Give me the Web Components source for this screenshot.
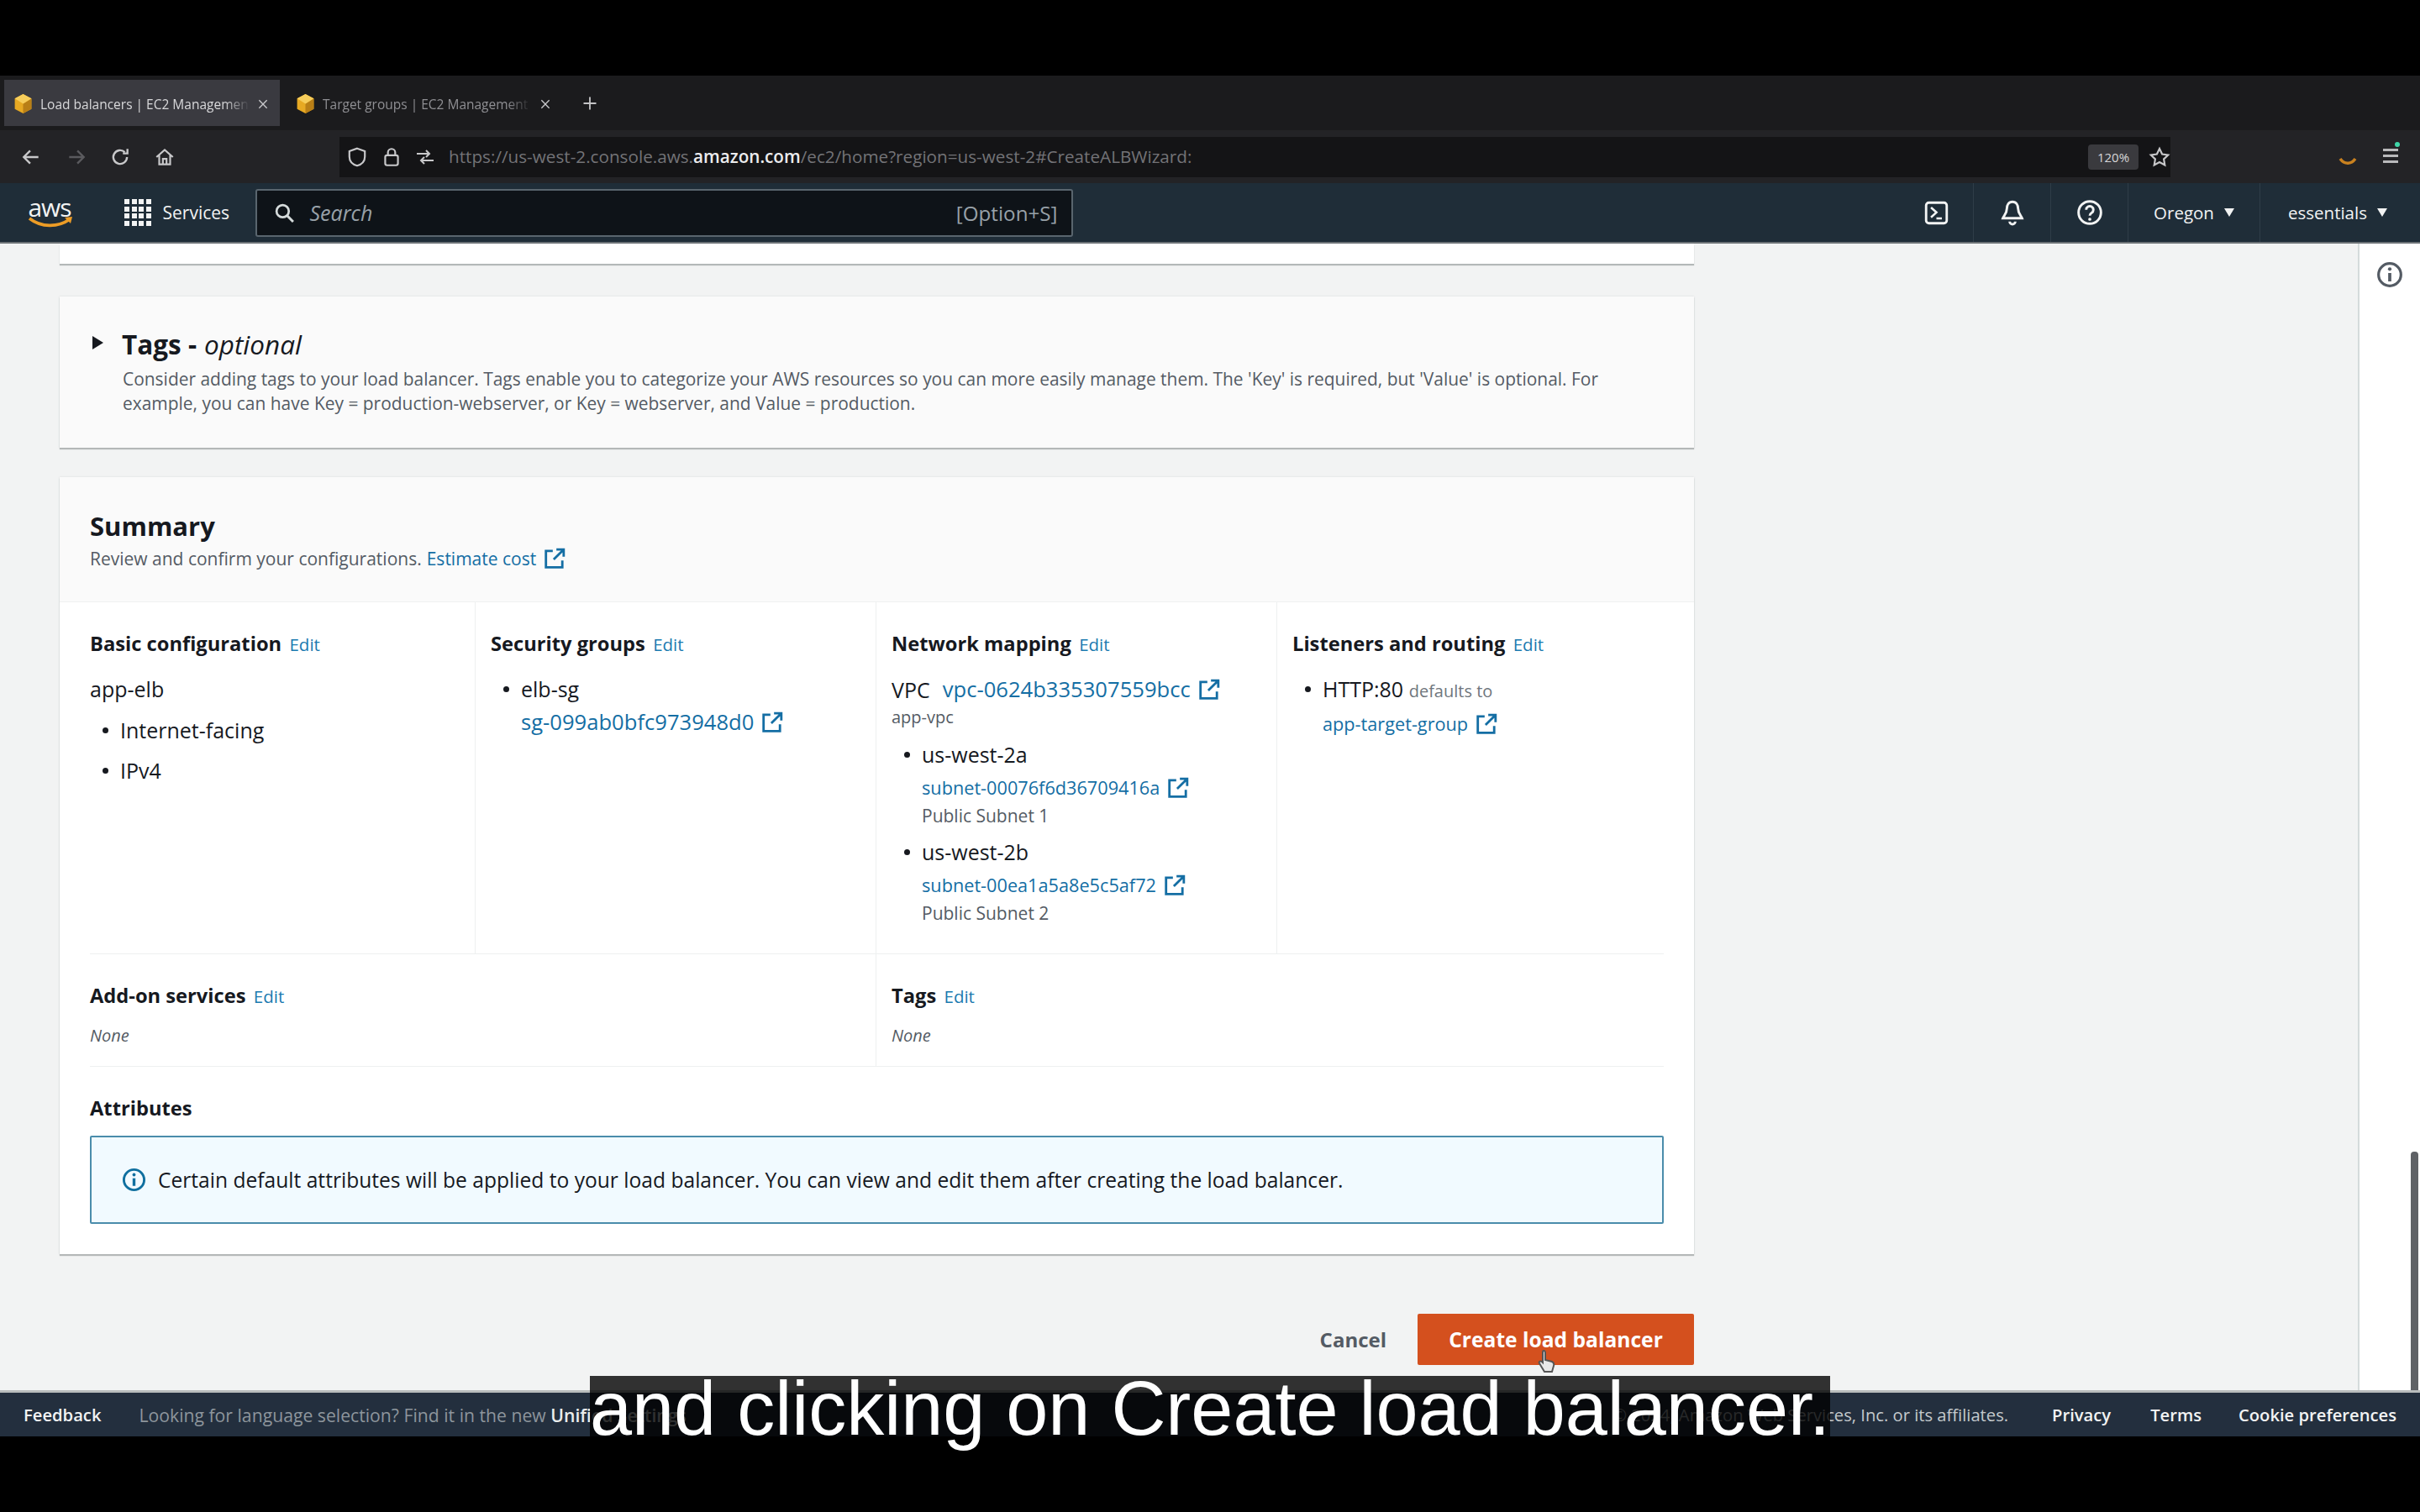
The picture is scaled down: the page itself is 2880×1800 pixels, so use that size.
<!DOCTYPE html>
<html lang="en">
<head>
<meta charset="utf-8">
<title>Load balancers | EC2 Management Console</title>
<style>
  html, body { margin: 0; background: #000; }
  body { width: 2880px; height: 1800px; overflow: hidden; position: relative; font-family: "Open Sans", "Noto Sans", sans-serif; }
</style>
</head>
<body>
<video-frame>
  <browser-tabs></browser-tabs>
  <browser-toolbar></browser-toolbar>
  <aws-nav></aws-nav>
  <console-main></console-main>
  <aws-footer></aws-footer>
</video-frame>
<video-caption>and clicking on Create load balancer.</video-caption>

<script>
const ICONS = {
  back: '<path d="M20 12H5M11 5l-7 7 7 7" fill="none" stroke="currentColor" stroke-width="2.2"/>',
  forward: '<path d="M4 12h15M13 5l7 7-7 7" fill="none" stroke="currentColor" stroke-width="2.2"/>',
  reload: '<path d="M19.5 12a7.5 7.5 0 1 1-2.4-5.5M20 3v5h-5" fill="none" stroke="currentColor" stroke-width="2.2"/>',
  home: '<path d="M3 12l9-8 9 8M6 10v10h12V10M10 20v-6h4v6" fill="none" stroke="currentColor" stroke-width="2"/>',
  shield: '<path d="M12 2.500l8.500 3v6c0 5-3.500 8.500-8.500 10-5-1.500-8.500-5-8.500-10v-6z" fill="none" stroke="currentColor" stroke-width="2"/>',
  lock: '<rect x="5" y="10" width="14" height="11" rx="2" fill="none" stroke="currentColor" stroke-width="2"/><path d="M8 10V7a4 4 0 0 1 8 0v3" fill="none" stroke="currentColor" stroke-width="2"/>',
  perms: '<path d="M2 8h15M13 4l4 4-4 4M22 16H7M11 12l-4 4 4 4" fill="none" stroke="currentColor" stroke-width="2"/>',
  star: '<path d="M12 2.800l2.900 6 6.500.9-4.700 4.500 1.100 6.500-5.800-3.100-5.800 3.100 1.100-6.500-4.700-4.500 6.500-.9z" fill="none" stroke="currentColor" stroke-width="2"/>',
  search: '<circle cx="10" cy="10" r="7" fill="none" stroke="currentColor" stroke-width="2.600"/><path d="M15 15l7 7" stroke="currentColor" stroke-width="2.800"/>',
  terminal: '<rect x="2.500" y="2.500" width="19" height="19" rx="2.500" fill="none" stroke="currentColor" stroke-width="2.200"/><path d="M7 7l5 4.500L7 16M12 17h5" fill="none" stroke="currentColor" stroke-width="2"/>',
  bell: '<path d="M12 2.500c-3.500 0-5 3-5 6 0 4-2.500 6-3.500 8.500h17c-1-2.500-3.500-4.500-3.500-8.500 0-3-1.500-6-5-6zM9.500 20a2.500 2.500 0 0 0 5 0" fill="none" stroke="currentColor" stroke-width="2.200"/>',
  help: '<circle cx="12" cy="12" r="10" fill="none" stroke="currentColor" stroke-width="2.200"/><path d="M8.800 9.500a3.200 3.200 0 1 1 4.800 2.800c-1 .6-1.600 1.200-1.600 2.500" fill="none" stroke="currentColor" stroke-width="2.200"/><circle cx="12" cy="18" r="1.400" fill="currentColor"/>',
  info: '<circle cx="12" cy="12" r="10" fill="none" stroke="currentColor" stroke-width="2.400"/><path d="M12 10.500V18" stroke="currentColor" stroke-width="2.800"/><circle cx="12" cy="7" r="1.600" fill="currentColor"/>',
  ext: '<path d="M10 3.500H2.500v18h18V14" fill="none" stroke="currentColor" stroke-width="2.600"/><path d="M14 2h8v8M21.500 2.500L11 13" fill="none" stroke="currentColor" stroke-width="2.600"/>',
  close: '<path d="M5 5l14 14M19 5L5 19" stroke="currentColor" stroke-width="2"/>',
  plus: '<path d="M12 3v18M3 12h18" stroke="currentColor" stroke-width="2.200"/>',
  cube: '<path d="M12 1l9.500 5v12L12 23l-9.500-5V6z" fill="#e7a923"/><path d="M12 12l9.500-6v12L12 23z" fill="#b97f16"/><path d="M12 12L2.500 6 12 1l9.500 5z" fill="#f6cd5b"/>'
};

class UiIcon extends HTMLElement {
  connectedCallback() {
    const size = this.getAttribute("size") || 24;
    this.attachShadow({ mode: "open" }).innerHTML = `
      <style>:host { display: inline-flex; flex: none; width: ${size}px; height: ${size}px; } svg { width: 100%; height: 100%; display: block; }</style>
      <svg viewBox="0 0 24 24">${ICONS[this.getAttribute("name")] || ""}</svg>`;
  }
}
customElements.define("ui-icon", UiIcon);

class VideoFrame extends HTMLElement {
  constructor() {
    super();
    this.attachShadow({ mode: "open" }).innerHTML = `
      <style>
        :host { display: flex; flex-direction: column; width: 2880px; height: 1620px; margin-top: 90px; filter: blur(.7px); }
        ::slotted(console-main) { flex: 1; min-height: 0; }
      </style>
      <slot></slot>`;
  }
}
customElements.define("video-frame", VideoFrame);

class BrowserTab extends HTMLElement {
  constructor() {
    super();
    this.attachShadow({ mode: "open" }).innerHTML = `
      <style>
        :host { display: flex; align-items: center; gap: 8px; width: 328px; height: 55px; padding: 2px 12px 0 10px; box-sizing: border-box; color: #8f8f93; font-size: 15.500px; white-space: nowrap; }
        :host([active]) { background: #3a3a40; color: #d8d8da; }
        span { flex: 1; overflow: hidden; -webkit-mask-image: linear-gradient(90deg, #000 88%, transparent); mask-image: linear-gradient(90deg, #000 88%, transparent); }
      </style>
      <ui-icon name="cube" size="25"></ui-icon><span><slot></slot></span>
      <ui-icon name="close" size="16" style="color:#c9c9cc"></ui-icon>`;
  }
}
customElements.define("browser-tab", BrowserTab);

class BrowserTabs extends HTMLElement {
  constructor() {
    super();
    this.attachShadow({ mode: "open" }).innerHTML = `
      <style>
        :host { display: flex; align-items: center; height: 65px; padding-left: 5px; gap: 8px; background: #1b1b1d; box-sizing: border-box; }
        ui-icon { color: #c4c4c6; margin-left: 15px; }
      </style>
      <browser-tab active>Load balancers | EC2 Management Console</browser-tab>
      <browser-tab>Target groups | EC2 Management Console</browser-tab>
      <ui-icon name="plus" size="20"></ui-icon>`;
  }
}
customElements.define("browser-tabs", BrowserTabs);

class BrowserToolbar extends HTMLElement {
  constructor() {
    super();
    this.attachShadow({ mode: "open" }).innerHTML = `
      <style>
        :host { display: flex; align-items: center; height: 63px; background: #232326; color: #c8c8ca; box-sizing: border-box; }
        .nav { display: flex; align-items: center; width: 404px; padding-left: 24px; box-sizing: border-box; }
        .nav ui-icon:nth-child(1) { margin-right: 28px; }
        .nav ui-icon:nth-child(2) { margin-right: 26px; color: #5a5a5e; }
        .nav ui-icon:nth-child(3) { margin-right: 27px; }
        .url { display: flex; align-items: center; width: 2179px; height: 48px; background: #141416; box-sizing: border-box; padding-left: 8px; }
        .url ui-icon { margin-right: 15px; }
        .addr { font-size: 20.700px; color: #737377; margin-left: 1px; margin-top: -2px; white-space: nowrap; width: 2046px; }
        .addr b { color: #ececee; font-weight: 600; }
        .zoom { width: 60px; height: 30px; background: #3a3a3e; border-radius: 4px; font-size: 15px; color: #d6d6d8; display: flex; align-items: center; justify-content: center; margin-left: -24px; margin-right: 12px; flex: none; }
        .url ui-icon:last-child { margin: 0; }
        .ext { flex: 1; display: flex; align-items: center; justify-content: flex-end; gap: 31px; padding-right: 26px; }
        .fox { width: 22px; height: 14px; margin-top: 14px; }
        .menu { position: relative; width: 18px; height: 20px; background: repeating-linear-gradient(#b9b9bb 0 3px, transparent 3px 7px); }
        .menu i { position: absolute; right: -2px; top: -8px; width: 6px; height: 6px; border-radius: 50%; background: #3fd6a8; }
      </style>
      <div class="nav">
        <ui-icon name="back" size="26"></ui-icon><ui-icon name="forward" size="26"></ui-icon>
        <ui-icon name="reload" size="26"></ui-icon><ui-icon name="home" size="26"></ui-icon>
      </div>
      <div class="url">
        <ui-icon name="shield" size="26"></ui-icon><ui-icon name="lock" size="26"></ui-icon><ui-icon name="perms" size="24"></ui-icon>
        <span class="addr">https://us-west-2.console.aws.<b>amazon.com</b>/ec2/home?region=us-west-2#CreateALBWizard:</span>
        <span class="zoom">120%</span><ui-icon name="star" size="26"></ui-icon>
      </div>
      <div class="ext">
        <svg class="fox" viewBox="0 0 22 14"><path d="M2 2c5 7 13 7 18 0" fill="none" stroke="#c9811f" stroke-width="3.500"/></svg>
        <div class="menu"><i></i></div>
      </div>`;
  }
}
customElements.define("browser-toolbar", BrowserToolbar);

class AwsNav extends HTMLElement {
  constructor() {
    super();
    this.attachShadow({ mode: "open" }).innerHTML = `
      <style>
        :host { display: flex; align-items: center; height: 70px; background: #1f2d38; color: #f2f3f3; font-size: 20.500px; box-sizing: border-box; position: relative; }
        .logo { width: 60px; margin-left: 29px; display: flex; flex-direction: column; align-items: center; font: 500 30px/26px "Open Sans", sans-serif; letter-spacing: -1px; }
        .logo svg { width: 56px; height: 14px; margin-top: -2px; }
        .grid { display: grid; grid-template-columns: repeat(4, 6px); grid-auto-rows: 6px; gap: 2.500px; margin-left: 59px; }
        .grid i { background: #f2f3f3; }
        .services { margin-left: 14px; width: 110px; font-size: 21px; }
        .search { display: flex; align-items: center; width: 973px; height: 57px; box-sizing: border-box; background: #0e1318; border: 2px solid #59656e; border-radius: 3px; padding: 0 16px 0 20px; color: #98a1a8; }
        .search ui-icon { color: #d5dbdb; margin-right: 18px; }
        .search em { flex: 1; font-size: 25px; }
        .search span { font-size: 24.200px; }
        .right { margin-left: auto; display: flex; align-items: center; height: 100%; padding-right: 30px; }
        .cell { height: 100%; display: flex; align-items: center; justify-content: center; box-sizing: border-box; border-right: 1px solid #2f3d48; }
        .tri { width: 0; height: 0; border: 6.500px solid transparent; border-top: 10px solid #f2f3f3; border-bottom: 0; margin-left: 12px; }
      </style>
      <div class="logo">aws<svg viewBox="0 0 56 14"><path d="M4 2c14 11 34 11 48 1" fill="none" stroke="#ec9c26" stroke-width="3.600"/><path d="M46 1l9-1-2 8z" fill="#ec9c26"/></svg></div>
      <div class="grid">${"<i></i>".repeat(16)}</div>
      <span class="services">Services</span>
      <div class="search"><ui-icon name="search" size="25"></ui-icon><em>Search</em><span>[Option+S]</span></div>
      <div class="right">
        <div class="cell" style="width:88px"><ui-icon name="terminal" size="31"></ui-icon></div>
        <div class="cell" style="width:92px"><ui-icon name="bell" size="32"></ui-icon></div>
        <div class="cell" style="width:92px"><ui-icon name="help" size="32"></ui-icon></div>
        <div class="cell" style="width:157px">Oregon<i class="tri"></i></div>
        <div class="cell" style="width:160px;border:0;justify-content:flex-start;padding-left:33px">essentials<i class="tri"></i></div>
      </div>`;
  }
}
customElements.define("aws-nav", AwsNav);

class EditLink extends HTMLElement {
  constructor() {
    super();
    this.attachShadow({ mode: "open" }).innerHTML = `
      <style>:host { display: inline; color: #1b7ab0; font-size: 20.500px; font-weight: 400; margin-left: 4px; }</style>Edit`;
  }
}
customElements.define("edit-link", EditLink);

class ExtLink extends HTMLElement {
  constructor() {
    super();
    this.attachShadow({ mode: "open" }).innerHTML = `
      <style>
        :host { display: inline-flex; align-items: center; gap: 9px; color: #146ea4; }
        :host([small]) { font-size: 21.700px; }
        ui-icon { color: #146ea4; }
      </style>
      <slot></slot><ui-icon name="ext" size="26"></ui-icon>`;
  }
}
customElements.define("ext-link", ExtLink);

class SumCol extends HTMLElement {
  constructor() {
    super();
    this.attachShadow({ mode: "open" }).innerHTML = `
      <style>
        :host { display: block; box-sizing: border-box; padding-top: 34px; border-right: 1px solid #eef0f0; margin-right: 18px; }
        :host([last]) { border-right: 0; margin-right: 0; }
        h3 { margin: 0 0 23px; font: 700 23.700px/30px "Open Sans", sans-serif; color: #16191f; white-space: nowrap; }
      </style>
      <h3>${this.getAttribute("heading")}<edit-link></edit-link></h3>
      <slot></slot>`;
  }
}
customElements.define("sum-col", SumCol);

class TagsCard extends HTMLElement {
  constructor() {
    super();
    this.attachShadow({ mode: "open" }).innerHTML = `
      <style>
        :host { display: block; height: 180px; background: #fafafa; box-shadow: 0 2px 1px #b4b8b8, 0 0 2px #d5d8d8; padding: 38px 0 0 39px; box-sizing: border-box; }
        h2 { margin: 0 0 8px; font: 700 31.500px/38px "Open Sans", sans-serif; color: #16191f; display: flex; align-items: center; }
        h2 i { width: 0; height: 0; border: 8px solid transparent; border-left: 13px solid #16191f; border-right: 0; margin: -4px 22px 0 0; }
        h2 em { font-weight: 400; margin-left: 9px; }
        p { margin: 0 0 0 36px; width: 1800px; font-size: 20.950px; line-height: 29px; color: #545b64; }
      </style>
      <h2><i></i>Tags -<em>optional</em></h2>
      <p>Consider adding tags to your load balancer. Tags enable you to categorize your AWS resources so you can more easily manage them. The 'Key' is required, but 'Value' is optional. For example, you can have Key = production-webserver, or Key = webserver, and Value = production.</p>`;
  }
}
customElements.define("tags-card", TagsCard);

class SummaryCard extends HTMLElement {
  constructor() {
    super();
    this.attachShadow({ mode: "open" }).innerHTML = `
      <style>
        :host { display: block; height: 925px; background: #fff; box-shadow: 0 2px 1px #b4b8b8, 0 0 2px #d5d8d8; font-size: 25px; color: #16191f; }
        header { height: 149px; box-sizing: border-box; background: #fafafa; padding: 39px 36px 0; border-bottom: 1px solid #f0f1f1; }
        h2 { margin: 0; font: 700 31px/38px "Open Sans", sans-serif; }
        header p { margin: 5px 0 0; font-size: 21px; line-height: 30px; color: #545b64; display: flex; align-items: center; gap: 6px; }
        header ext-link { font-size: 21px; }
        .body { padding: 0 36px; }
        .row1 { display: grid; grid-template-columns: repeat(3, 477px) 1fr; height: 418px; border-bottom: 1px solid #eef0f0; }
        .row2 { display: grid; grid-template-columns: 954px 1fr; height: 133px; border-bottom: 1px solid #eef0f0; }
        .line { line-height: 30px; }
        ul { list-style: none; margin: 0; padding: 0; }
        li { position: relative; padding-left: 36px; line-height: 30px; }
        li::before { content: ""; position: absolute; left: 15px; top: 12px; width: 7px; height: 7px; border-radius: 50%; background: #16191f; }
        .none { font-style: italic; font-size: 20px; color: #545b64; line-height: 26px; margin-top: -4px; }
        .sub { color: #545b64; font-size: 21px; line-height: 30px; }
        .vpc { display: flex; gap: 13px; padding-top: 1px; }
        .vpc ext-link { margin-left: 2px; }
        .vpc ext-link, .sg { font-size: 25.600px; }
        .sg { padding-left: 36px; margin-top: 10px; line-height: 30px; }
        h3 { margin: 34px 0 18px; font: 700 23.700px/30px "Open Sans", sans-serif; }
        .alert { display: flex; align-items: center; gap: 14px; height: 105px; box-sizing: border-box; border: 2px solid #4a8cab; border-radius: 2px; background: #f1faff; padding-left: 36px; font-size: 24.600px; color: #16191f; }
        .alert ui-icon { color: #0f6f9f; }
      </style>
      <header>
        <h2>Summary</h2>
        <p>Review and confirm your configurations. <ext-link>Estimate cost</ext-link></p>
      </header>
      <div class="body">
        <div class="row1">
          <sum-col heading="Basic configuration">
            <div class="line" style="margin-bottom:19px">app-elb</div>
            <ul><li style="margin-bottom:18px">Internet-facing</li><li>IPv4</li></ul>
          </sum-col>
          <sum-col heading="Security groups">
            <ul><li>elb-sg</li></ul>
            <div class="sg"><ext-link>sg-099ab0bfc973948d0</ext-link></div>
          </sum-col>
          <sum-col heading="Network mapping">
            <div class="vpc line">VPC <ext-link>vpc-0624b335307559bcc</ext-link></div>
            <div class="sub" style="margin-top:3px;margin-bottom:14px;font-size:20px">app-vpc</div>
            <ul>
              <li>us-west-2a<div style="margin-top:8px"><ext-link small>subnet-00076f6d36709416a</ext-link></div><div class="sub" style="margin-top:3px">Public Subnet 1</div></li>
              <li style="margin-top:13px">us-west-2b<div style="margin-top:8px"><ext-link small>subnet-00ea1a5a8e5c5af72</ext-link></div><div class="sub" style="margin-top:3px">Public Subnet 2</div></li>
            </ul>
          </sum-col>
          <sum-col heading="Listeners and routing" last>
            <ul><li>HTTP:80 <span style="font-size:20px;color:#6f767d">defaults to</span><div style="margin-top:7px"><ext-link small>app-target-group</ext-link></div></li></ul>
          </sum-col>
        </div>
        <div class="row2">
          <sum-col heading="Add-on services"><div class="none">None</div></sum-col>
          <sum-col heading="Tags" last><div class="none">None</div></sum-col>
        </div>
        <h3>Attributes</h3>
        <div class="alert"><ui-icon name="info" size="29"></ui-icon>Certain default attributes will be applied to your load balancer. You can view and edit them after creating the load balancer.</div>
      </div>`;
  }
}
customElements.define("summary-card", SummaryCard);

class ConsoleMain extends HTMLElement {
  constructor() {
    super();
    this.attachShadow({ mode: "open" }).innerHTML = `
      <style>
        :host { display: flex; background: #f2f3f3; overflow: hidden; border-top: 2px solid #6c7276; border-bottom: 3px solid #b8bcbc; box-sizing: border-box; }
        .col { width: 1945px; margin-left: 71px; display: flex; flex-direction: column; }
        .stub { height: 24px; background: #fff; box-shadow: 0 2px 1px #b4b8b8; margin-bottom: 39px; flex: none; }
        summary-card { margin-top: 35px; flex: none; }
        .actions { display: flex; justify-content: flex-end; align-items: center; gap: 37px; margin-top: 71px; position: relative; }
        .cancel { font: 700 24px/30px "Open Sans", sans-serif; color: #545b64; }
        .btn { width: 329px; height: 61px; background: #d4501e; color: #fff; font: 700 24.600px/61px "Open Sans", sans-serif; text-align: center; border-radius: 2px; }
        .cursor { position: absolute; right: 163px; top: 42px; width: 24px; height: 32px; }
        .side { margin-left: auto; width: 74px; background: #fff; border-left: 2px solid #d5dbdb; box-sizing: border-box; position: relative; display: flex; justify-content: center; padding: 21px 0 0 0; }
        .side ui-icon { color: #545b64; }
        .thumb { position: absolute; right: 2px; bottom: 0; width: 9px; height: 284px; background: #5f6266; border-radius: 4px 4px 0 0; }
      </style>
      <div class="col">
        <div class="stub"></div>
        <tags-card></tags-card>
        <summary-card></summary-card>
        <div class="actions">
          <span class="cancel">Cancel</span>
          <span class="btn">Create load balancer</span>
          <svg class="cursor" viewBox="0 0 24 32"><path d="M8 2c2 0 2 1 2 3v8l8 2c2 1 3 2 2 5l-2 7H9L3 17c-1-2 1-3 3-2l1 1V4c0-1 0-2 1-2z" fill="#e8e8e8" stroke="#555" stroke-width="2"/></svg>
        </div>
      </div>
      <div class="side"><ui-icon name="info" size="32"></ui-icon><div class="thumb"></div></div>`;
  }
}
customElements.define("console-main", ConsoleMain);

class AwsFooter extends HTMLElement {
  constructor() {
    super();
    this.attachShadow({ mode: "open" }).innerHTML = `
      <style>
        :host { display: flex; align-items: center; height: 52px; background: #232f3e; color: #f2f3f3; font-size: 20.200px; font-weight: 600; white-space: nowrap; flex: none; }
        .fb { margin-left: 28px; }
        .msg { margin-left: 45px; color: #8d959c; font-weight: 400; font-size: 21.200px; }
        .msg b { color: #eaeded; font-weight: 600; }
        .right { margin-left: auto; display: flex; align-items: center; padding-right: 28px; }
        .copy { color: #c4c9cc; font-weight: 400; margin-right: 52px; }
        .right span:nth-child(2) { margin-right: 47px; }
        .right span:nth-child(3) { margin-right: 44px; }
      </style>
      <span class="fb">Feedback</span>
      <span class="msg">Looking for language selection? Find it in the new <b>Unified Settings</b></span>
      <div class="right">
        <span class="copy">© 2024, Amazon Web Services, Inc. or its affiliates.</span>
        <span>Privacy</span><span>Terms</span><span>Cookie preferences</span>
      </div>`;
  }
}
customElements.define("aws-footer", AwsFooter);

class VideoCaption extends HTMLElement {
  constructor() {
    super();
    this.attachShadow({ mode: "open" }).innerHTML = `
      <style>
        :host { position: absolute; left: 702px; top: 1638px; height: 72px; background: rgba(0,0,0,.8); color: #fff; font: 90px/78px "Liberation Sans", Arial, sans-serif; white-space: nowrap; }
      </style>
      <slot></slot>`;
  }
}
customElements.define("video-caption", VideoCaption);
</script>
</body>
</html>
